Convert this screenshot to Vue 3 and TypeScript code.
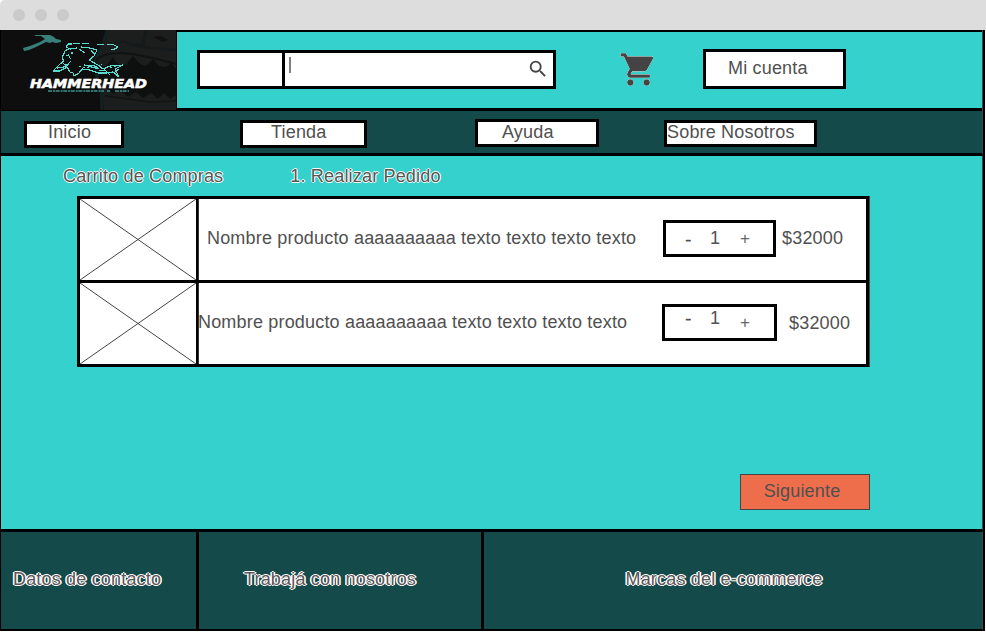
<script setup lang="ts">
interface NavItem { label: string; key: string }
interface CartLine { name: string; quantity: number; price: string; key: string }

const nav: NavItem[] = [
  { label: 'Inicio', key: 'inicio' },
  { label: 'Tienda', key: 'tienda' },
  { label: 'Ayuda', key: 'ayuda' },
  { label: 'Sobre Nosotros', key: 'sobre' },
]

const lines: CartLine[] = [
  { name: 'Nombre producto aaaaaaaaaa texto texto texto texto', quantity: 1, price: '$32000', key: 'first' },
  { name: 'Nombre producto aaaaaaaaaa texto texto texto texto', quantity: 1, price: '$32000', key: 'second' },
]
</script>

<template>
  <div class="window">
    <div class="titlebar"><i></i><i></i><i></i></div>
    <div class="page">
      <header class="header">
        <svg class="logo" viewBox="1 30 175 80" width="175" height="80">
          <rect x="1" y="30" width="175" height="80" fill="#0e0e0e" />
          <path d="M108 30H176V110H104L102 96L98 80L96 60L101 46Z" fill="#1c1d1d" />
          <path d="M107 30L103 45L95 60L97 77L101 92L102 110" fill="none" stroke="#122022" stroke-width="3" />
          <path d="M110 44L124 41L132 45L145 44M146 30L143 44M133 45L150 48L176 50" fill="none" stroke="#151a1b" stroke-width="2.5" />
          <path d="M153 37L161 36L168 40L163 42Z" fill="#111" />
          <path d="M96 60Q104 52 122 53T176 64" fill="none" stroke="#101313" stroke-width="2" />
          <path d="M98 66L106 66L113 57L118 64L126 65L133 56L140 64L146 66L153 59L159 66L166 67L171 63L176 69V95L170 99L164 93L158 99L151 93L143 98L136 92L128 97L121 90L113 94L106 87L99 80Z" fill="#0e0f0f" />
          <path d="M105 96L129 99L150 102L176 101" fill="none" stroke="#111415" stroke-width="1.4" />
          <path d="M23 48L30 46L40 42L45 39L41 36L35 36V35H50L54 37L56 39L61 40V42L56 43L52 42L50 43L46 42L40 45L36 47L29 50L24 51Z" fill="#397f79" />
          <g fill="none" stroke="#5adbd0" stroke-width="1.15" stroke-linejoin="bevel" shape-rendering="crispEdges">
            <path d="M72 44H68L66 47L70 49L77 48M73 43.5H80M82 43.5H89M97 44.5H104M107 44.5H113L118 47L114 49.5H111" />
            <path d="M70 48L65 51L62 58L64 61L60 64L53 71L60 71L67 67L70 72L73 73L74 76L79 73L82 69L90 70L98 73L107 73L113 72L119 77L115 69L123 65L110 66L103 69L98 65L89 60L94 56L97 50L90 48L81 47" />
            <path d="M57 68L64 67L69 64L64 65M79 49L85 53M84 65L95 66L99 69L88 66M99 71L105 70L110 75M115 72L119 69M91 50L95 55M63 63L67 67" />
            <path d="M68 54L71 60L69 64M66 55L70 56L69 59M72 52V55M79 66L86 68L91 66M101 64L104 67M110 68L117 66" stroke-dasharray="2 2" />
          </g>
          <text class="brand" x="30" y="88.4" textLength="117" lengthAdjust="spacingAndGlyphs">HAMMERHEAD</text>
          <path d="M48 91H104M107 91H110M115 91H129" stroke="#3b948e" stroke-width="1.4" stroke-dasharray="4 1 2 .6" />
        </svg>
        <div class="search">
          <div class="category"></div>
          <div class="query">
            <i class="caret"></i>
            <svg class="lens" viewBox="0 0 24 24" width="22" height="22"><path fill="#444" d="M15.5 14h-.79l-.28-.27A6.471 6.471 0 0 0 16 9.5 6.5 6.5 0 1 0 9.5 16c1.61 0 3.09-.59 4.23-1.57l.27.28v.79l5 4.99L20.49 19l-4.99-5zm-6 0C7.01 14 5 11.99 5 9.5S7.01 5 9.5 5 14 7.01 14 9.5 11.99 14 9.5 14z" /></svg>
          </div>
        </div>
        <svg class="cart" viewBox="0 0 24 24" width="39" height="39" preserveAspectRatio="none"><path d="M7 18c-1.1 0-1.99.9-1.99 2S5.9 22 7 22s2-.9 2-2-.9-2-2-2zM1 2v2h2l3.6 7.59-1.35 2.45c-.16.28-.25.61-.25.96 0 1.1.9 2 2 2h12v-2H7.42c-.14 0-.25-.11-.25-.25l.03-.12.9-1.63h7.45c.75 0 1.41-.41 1.75-1.03l3.58-6.49A1.003 1.003 0 0 0 20 4H5.21l-.94-2H1zm16 16c-1.1 0-1.99.9-1.99 2s.89 2 1.99 2 2-.9 2-2-.9-2-2-2z" /></svg>
        <div class="account">Mi cuenta</div>
      </header>
      <nav class="nav">
        <div v-for="item in nav" :key="item.key" class="nav-item" :class="item.key"><span>{{ item.label }}</span></div>
      </nav>
      <main class="main">
        <div class="crumbs">
          <span class="halo">Carrito de Compras</span>
          <span class="halo step">1. Realizar Pedido</span>
        </div>
        <section class="table">
          <div v-for="line in lines" :key="line.key" class="line" :class="line.key">
            <svg class="photo" viewBox="0 0 116 81" width="116" height="81"><path d="M0 0L116 81M116 0L0 81" stroke="#444" stroke-width="1" /></svg>
            <span class="name">{{ line.name }}</span>
            <div class="stepper">
              <span class="minus">-</span><span class="count">{{ line.quantity }}</span><span class="plus">+</span>
            </div>
            <span class="price">{{ line.price }}</span>
          </div>
        </section>
        <button class="next">Siguiente</button>
      </main>
      <footer class="footer">
        <div class="contact"><span class="halo">Datos de contacto</span></div>
        <div class="jobs"><span class="halo">Trabajá con nosotros</span></div>
        <div class="brands"><span class="halo">Marcas del e-commerce</span></div>
      </footer>
    </div>
  </div>
</template>

<style>
body { background: #fff; }
</style>

<style scoped>
* { box-sizing: border-box; }
.window { width: 986px; height: 632px; overflow: hidden; font: 18px/20px "Liberation Sans", Arial, sans-serif; letter-spacing: .18px; color: #505050; white-space: nowrap; }
.titlebar { height: 30px; background: #ddd; border-top-left-radius: 5px; display: flex; align-items: center; gap: 10px; padding-left: 13px; }
.titlebar i { width: 12px; height: 12px; border-radius: 50%; background: #cacaca; }
.page { width: 985px; height: 601px; background: #000; border-left: 1px solid #000; border-right: 2px solid #000; display: flex; flex-direction: column; }
.header { height: 81px; display: flex; align-items: flex-start; background: linear-gradient(#000 0 2px, #35d1cd 2px 78px, #000 78px); border-right: 1px solid #444; }
.logo { display: block; flex: none; box-shadow: 1px 0 #000; }
.brand { font: italic bold 13px "DejaVu Sans", sans-serif; letter-spacing: 0; fill: #fff; stroke: #fff; stroke-width: .6px; }
.search { width: 359px; height: 39px; margin: 20px 0 0 21px; border: 3px solid #000; background: #fff; display: flex; }
.category { width: 85px; border-right: 3px solid #000; }
.query { flex: 1; display: flex; align-items: flex-start; justify-content: space-between; padding: 4px 4px 0 4px; }
.caret { width: 2px; height: 16px; background: #808080; }
.lens { margin-top: 1px; }
.cart { margin: 20px 0 0 63px; overflow: visible; fill: #444; filter: drop-shadow(0 0 .5px #fff) drop-shadow(0 0 .4px #fff); }
.account { width: 143px; height: 40px; margin: 19px 0 0 45px; border: 3px solid #000; background: #fff; padding: 6px 0 0 22px; }
.nav { height: 45px; background: #144b4a; border-bottom: 3px solid #000; border-right: 1px solid #444; display: flex; align-items: flex-start; }
.nav-item { height: 28px; border: 3px solid #000; background: #fff; line-height: 20px; }
.nav-item span { display: block; }
.inicio { width: 100px; height: 27px; margin: 10px 0 0 23px; padding-left: 21px; }
.inicio span { margin-top: -2px; }
.tienda { width: 127px; margin: 9px 0 0 116px; padding-left: 28px; }
.tienda span { margin-top: -1px; }
.ayuda { width: 124px; margin: 8px 0 0 108px; padding-left: 24px; }
.sobre { width: 153px; height: 27px; margin: 9px 0 0 65px; }
.sobre span { margin-top: -1px; }
.main { height: 376px; background: #35d1cd; border-bottom: 3px solid #000; border-right: 1px solid #444; display: flex; flex-direction: column; }
.crumbs { display: flex; height: 40px; padding: 10px 0 0 62px; }
.step { margin-left: 67px; }
.halo { text-shadow: -1px 0 #fff, 1px 0 #fff, 0 -1px #fff, 0 1px #fff; color: #555; }
.footer .halo { text-shadow: -1px 0 #fff, 1px 0 #fff, 0 -1px #fff, 0 1px #fff, -1.5px 0 #fff, 1.5px 0 #fff; color: #5c5558; }
.table { width: 792px; margin-left: 76px; border: 3px solid #000; background: #fff; box-shadow: 1px 0 #444; }
.line { height: 81px; display: flex; align-items: flex-start; }
.line + .line { height: 84px; border-top: 3px solid #000; }
.photo { flex: none; display: block; width: 118px; height: 81px; border-right: 2px solid #000; box-shadow: 1px 0 #333; }
.name { width: 456px; margin: 29px 0 0 9px; }
.stepper { width: 113px; height: 37px; margin-top: 21px; border: 3px solid #000; display: flex; padding: 5px 0 0 19px; }
.stepper span { width: 25px; }
.minus { padding-top: 2px; text-shadow: .5px 0 #505050; }
.plus { font-size: 17px; padding: 1px 0 0 5px; color: #666; }
.price { margin: 29px 0 0 6px; }
.second .name { margin-left: 0; width: 464px; }
.second .stepper { width: 115px; padding-left: 20px; }
.second .minus { margin-top: -5px; }
.second .count { margin-top: -4px; }
.second .price { margin: 30px 0 0 12px; }
.next { width: 130px; height: 36px; margin: 107px 0 0 739px; border: 1px solid #444; background: #ee6e4c; color: #505050; font: inherit; letter-spacing: inherit; padding: 0 6px 2px 0; }
.footer { height: 99px; border-bottom: 2px solid #000; border-right: 1px solid #444; background: #144b4a; display: flex; }
.footer div { padding-top: 37px; }
.contact { width: 198px; border-right: 3px solid #000; padding-left: 12px; }
.jobs { width: 285px; border-right: 3px solid #000; padding-left: 45px; }
.brands { flex: 1; padding-left: 141.5px; }
</style>
